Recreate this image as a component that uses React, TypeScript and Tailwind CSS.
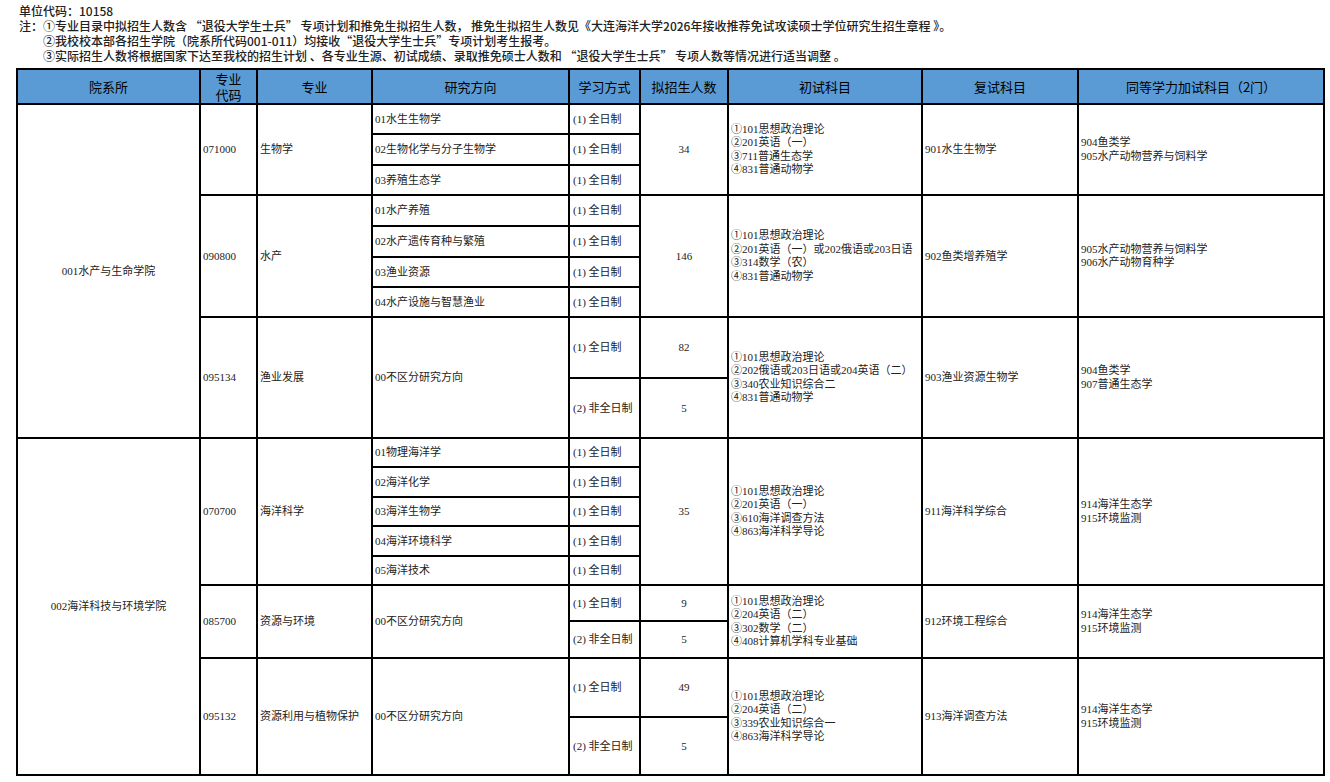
import React from 'react';

type Sub = { dir?: string; mode: string; count?: string; h: number };
type Major = {
  code: string;
  name: string;
  dir?: string;
  count?: string;
  subs: Sub[];
  exam: string[];
  retest: string;
  extra: string[];
};
type Dept = { name: string; majors: Major[] };

const FT = '(1) 全日制';
const PT = '(2) 非全日制';

const depts: Dept[] = [
  {
    name: '001水产与生命学院',
    majors: [
      {
        code: '071000',
        name: '生物学',
        count: '34',
        subs: [
          { dir: '01水生生物学', mode: FT, h: 30 },
          { dir: '02生物化学与分子生物学', mode: FT, h: 31 },
          { dir: '03养殖生态学', mode: FT, h: 30 },
        ],
        exam: ['①101思想政治理论', '②201英语（一）', '③711普通生态学', '④831普通动物学'],
        retest: '901水生生物学',
        extra: ['904鱼类学', '905水产动物营养与饲料学'],
      },
      {
        code: '090800',
        name: '水产',
        count: '146',
        subs: [
          { dir: '01水产养殖', mode: FT, h: 31 },
          { dir: '02水产遗传育种与繁殖', mode: FT, h: 31 },
          { dir: '03渔业资源', mode: FT, h: 30 },
          { dir: '04水产设施与智慧渔业', mode: FT, h: 30 },
        ],
        exam: ['①101思想政治理论', '②201英语（一）或202俄语或203日语', '③314数学（农）', '④831普通动物学'],
        retest: '902鱼类增养殖学',
        extra: ['905水产动物营养与饲料学', '906水产动物育种学'],
      },
      {
        code: '095134',
        name: '渔业发展',
        dir: '00不区分研究方向',
        subs: [
          { mode: FT, count: '82', h: 61 },
          { mode: PT, count: '5', h: 60 },
        ],
        exam: ['①101思想政治理论', '②202俄语或203日语或204英语（二）', '③340农业知识综合二', '④831普通动物学'],
        retest: '903渔业资源生物学',
        extra: ['904鱼类学', '907普通生态学'],
      },
    ],
  },
  {
    name: '002海洋科技与环境学院',
    majors: [
      {
        code: '070700',
        name: '海洋科学',
        count: '35',
        subs: [
          { dir: '01物理海洋学', mode: FT, h: 29 },
          { dir: '02海洋化学', mode: FT, h: 30 },
          { dir: '03海洋生物学', mode: FT, h: 29 },
          { dir: '04海洋环境科学', mode: FT, h: 30 },
          { dir: '05海洋技术', mode: FT, h: 29 },
        ],
        exam: ['①101思想政治理论', '②201英语（一）', '③610海洋调查方法', '④863海洋科学导论'],
        retest: '911海洋科学综合',
        extra: ['914海洋生态学', '915环境监测'],
      },
      {
        code: '085700',
        name: '资源与环境',
        dir: '00不区分研究方向',
        subs: [
          { mode: FT, count: '9', h: 36 },
          { mode: PT, count: '5', h: 37 },
        ],
        exam: ['①101思想政治理论', '②204英语（二）', '③302数学（二）', '④408计算机学科专业基础'],
        retest: '912环境工程综合',
        extra: ['914海洋生态学', '915环境监测'],
      },
      {
        code: '095132',
        name: '资源利用与植物保护',
        dir: '00不区分研究方向',
        subs: [
          { mode: FT, count: '49', h: 59 },
          { mode: PT, count: '5', h: 58 },
        ],
        exam: ['①101思想政治理论', '②204英语（二）', '③339农业知识综合一', '④863海洋科学导论'],
        retest: '913海洋调查方法',
        extra: ['914海洋生态学', '915环境监测'],
      },
    ],
  },
];

const td = 'border-2 border-black align-middle px-[2px] text-left';
const tdc = 'border-2 border-black align-middle text-center';
const th = 'border-2 border-black bg-[#5b9bd5] font-normal text-center align-middle text-[13px] leading-[16px]';

// circled numbers come out tiny in the serif face, so give them the CJK font
function Lines({ items, circled }: { items: string[]; circled?: boolean }) {
  return (
    <div className="flex flex-col leading-[13.5px]">
      {items.map((t) => (
        <span key={t} className="whitespace-nowrap">
          {circled ? (
            <>
              <span className="font-['Noto_Sans_CJK_SC',sans-serif] leading-[0]">{t.slice(0, 1)}</span>
              {t.slice(1)}
            </>
          ) : (
            t
          )}
        </span>
      ))}
    </div>
  );
}

function Body() {
  const rows: React.ReactNode[] = [];
  depts.forEach((dept) => {
    const deptSpan = dept.majors.reduce((n, m) => n + m.subs.length, 0);
    dept.majors.forEach((m, mi) => {
      m.subs.forEach((s, si) => {
        const first = si === 0;
        rows.push(
          <tr key={`${m.code}-${si}`} style={{ height: s.h }}>
            {mi === 0 && first && (
              <td rowSpan={deptSpan} className={tdc}>{dept.name}</td>
            )}
            {first && <td rowSpan={m.subs.length} className={td}>{m.code}</td>}
            {first && <td rowSpan={m.subs.length} className={td}>{m.name}</td>}
            {m.dir ? (
              first && <td rowSpan={m.subs.length} className={td}>{m.dir}</td>
            ) : (
              <td className={td}>{s.dir}</td>
            )}
            <td className={`${td} pl-[3px]`}>{s.mode}</td>
            {m.count ? (
              first && <td rowSpan={m.subs.length} className={tdc}>{m.count}</td>
            ) : (
              <td className={tdc}>{s.count}</td>
            )}
            {first && (
              <td rowSpan={m.subs.length} className={td}>
                <Lines items={m.exam} circled />
              </td>
            )}
            {first && <td rowSpan={m.subs.length} className={td}>{m.retest}</td>}
            {first && (
              <td rowSpan={m.subs.length} className={td}>
                <Lines items={m.extra} />
              </td>
            )}
          </tr>
        );
      });
    });
  });
  return <tbody>{rows}</tbody>;
}

export default function App() {
  return (
    <div className="w-[1330px] h-[782px] overflow-hidden bg-white pt-[3px] text-[#1a1a1a]">
      <div className="pl-[19px] font-['Noto_Sans_CJK_SC','Liberation_Sans',sans-serif] font-medium text-[12px] leading-[15px] text-[#222]">
        <div>单位代码：10158</div>
        <div className="flex">
          <span className="w-[24px] shrink-0">注：</span>
          <span>①专业目录中拟招生人数含 “退役大学生士兵” 专项计划和推免生拟招生人数， 推免生拟招生人数见《大连海洋大学2026年接收推荐免试攻读硕士学位研究生招生章程 》。</span>
        </div>
        <div className="pl-[24px]">②我校校本部各招生学院（院系所代码001-011）均接收“退役大学生士兵”专项计划考生报考。</div>
        <div className="pl-[24px]">③实际招生人数将根据国家下达至我校的招生计划 、各专业生源、初试成绩、录取推免硕士人数和 “退役大学生士兵” 专项人数等情况进行适当调整 。</div>
      </div>
      <table className="mt-[5px] ml-[16px] w-[1307px] table-fixed border-collapse font-['Liberation_Serif','Noto_Sans_CJK_SC',serif] text-[11px] text-[#222]">
        <colgroup>
          <col className="w-[183px]" />
          <col className="w-[57px]" />
          <col className="w-[115px]" />
          <col className="w-[197px]" />
          <col className="w-[71px]" />
          <col className="w-[88px]" />
          <col className="w-[194px]" />
          <col className="w-[156px]" />
          <col className="w-[246px]" />
        </colgroup>
        <thead className="font-['Noto_Sans_CJK_SC','Liberation_Sans',sans-serif] text-black">
          <tr className="h-[35px]">
            <th className={th}>院系所</th>
            <th className={th}>
              <div className="flex flex-col">
                <span>专业</span>
                <span>代码</span>
              </div>
            </th>
            <th className={th}>专业</th>
            <th className={th}>研究方向</th>
            <th className={th}>学习方式</th>
            <th className={th}>拟招生人数</th>
            <th className={th}>初试科目</th>
            <th className={th}>复试科目</th>
            <th className={th}>同等学力加试科目（2门）</th>
          </tr>
        </thead>
        <Body />
      </table>
    </div>
  );
}
